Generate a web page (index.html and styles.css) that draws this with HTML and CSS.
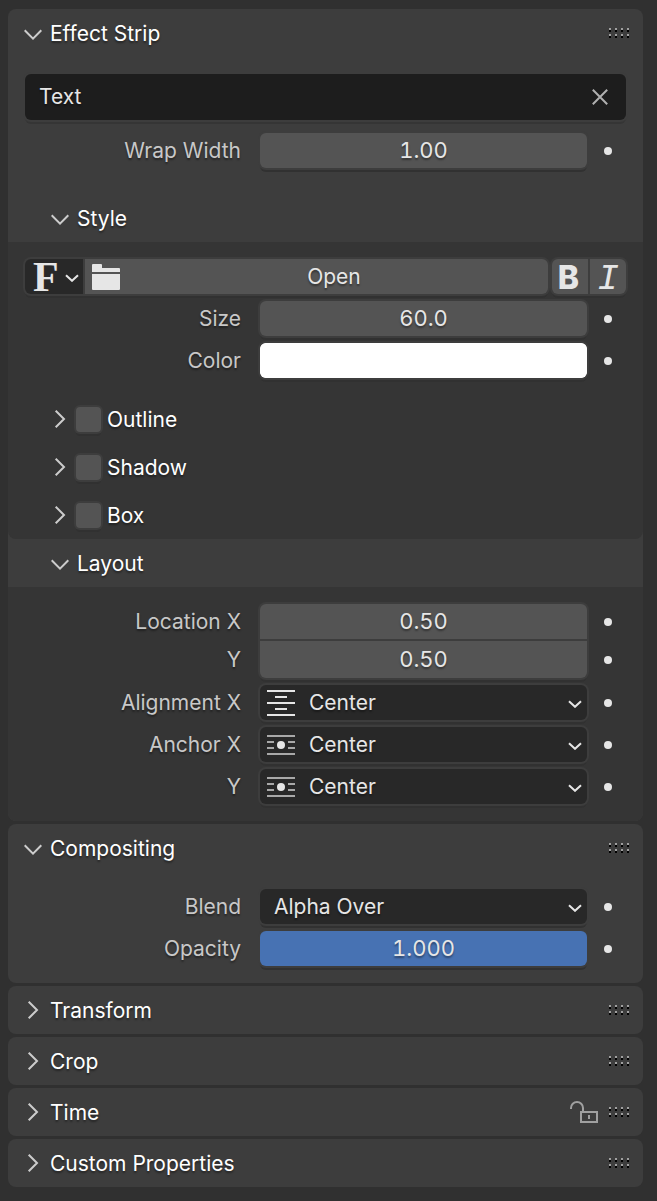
FILE: index.html
```html
<!DOCTYPE html>
<html lang="en">
<head>
<meta charset="utf-8">
<meta name="viewport" content="width=device-width, initial-scale=1">
<title>Strip Properties</title>
<link rel="stylesheet" href="styles.css">
</head>
<body>
<svg class="defs" aria-hidden="true">
  <symbol id="open" viewBox="0 0 18 18"><path class="line" d="M.7 6.200 9 14.600l8.300-8.400"/></symbol>
  <symbol id="closed" viewBox="0 0 18 18"><path class="line" d="M4.700.7 13 9l-8.300 8.300"/></symbol>
  <symbol id="drop" viewBox="0 0 14 8"><path class="line" d="M1 1.200l6 5.600 6-5.600"/></symbol>
  <symbol id="grip" viewBox="0 0 21 10">
    <path fill="#a0a0a0" d="M0 0h2v2H0zM6 0h2v2H6zM12 0h2v2h-2zM18 0h2v2h-2zM0 6h2v2H0zM6 6h2v2H6zM12 6h2v2h-2zM18 6h2v2h-2z"/>
    <path fill="#000" d="M0 2h2v2H0zM6 2h2v2H6zM12 2h2v2h-2zM18 2h2v2h-2zM0 8h2v2H0zM6 8h2v2H6zM12 8h2v2h-2zM18 8h2v2h-2z"/>
  </symbol>
  <symbol id="anchor" viewBox="0 0 28 28">
    <path stroke="#a8a8a8" stroke-width="2" d="M0 5h28M0 11h7M21 11h7M0 17h7M21 17h7M0 23h28"/>
    <circle cx="14" cy="14" r="4" fill="#e6e6e6"/>
  </symbol>
</svg>

<main class="panels">
  <section class="panel">
    <h2 class="head">
      <button class="toggle" type="button" aria-expanded="true"><svg class="chevron"><use href="#open"/></svg>Effect Strip</button>
      <svg class="grip"><use href="#grip"/></svg>
    </h2>
    <div class="content">
      <div class="textbox">
        <input class="textbox-input" type="text" value="Text" aria-label="Text">
        <button class="clear" type="button" aria-label="Clear"><svg class="clear-icon" viewBox="0 0 16 16"><path class="line" d="M.8.8l14.400 14.400M15.200.8.8 15.200"/></svg></button>
      </div>
      <div class="row">
        <label class="label" for="wrap">Wrap Width</label>
        <input class="field number" id="wrap" type="text" value="1.00">
        <button class="dot" type="button" aria-label="Animate wrap width"></button>
      </div>
    </div>

    <h3 class="head sub">
      <button class="toggle" type="button" aria-expanded="true"><svg class="chevron"><use href="#open"/></svg>Style</button>
    </h3>
    <div class="inset">
      <div class="content">
        <div class="fonts">
          <div class="joined font-source">
            <button class="font-menu" type="button" aria-label="Browse fonts"><span class="serif-f">F</span><svg class="drop"><use href="#drop"/></svg></button>
            <button class="file" type="button"><svg class="folder" viewBox="0 0 28 26"><path fill="#e6e6e6" d="M0 8V1q0-1 1-1h8q1 0 1 1v3h17q1 0 1 1v3zM0 10h28v15q0 1-1 1H1q-1 0-1-1z"/></svg><span class="file-name">Open</span></button>
          </div>
          <div class="joined">
            <button class="format bold" type="button" aria-label="Bold">B</button>
            <button class="format italic" type="button" aria-label="Italic">I</button>
          </div>
        </div>
        <div class="row">
          <label class="label" for="size">Size</label>
          <input class="field number" id="size" type="text" value="60.0">
          <button class="dot" type="button" aria-label="Animate size"></button>
        </div>
        <div class="row">
          <label class="label" for="color">Color</label>
          <input class="field swatch" id="color" type="color" value="#ffffff">
          <button class="dot" type="button" aria-label="Animate color"></button>
        </div>
      </div>
      <div class="head sub">
        <button class="toggle" type="button" aria-expanded="false" aria-label="Expand Outline"><svg class="chevron"><use href="#closed"/></svg></button>
        <input class="check" id="outline" type="checkbox"><label for="outline">Outline</label>
      </div>
      <div class="head sub">
        <button class="toggle" type="button" aria-expanded="false" aria-label="Expand Shadow"><svg class="chevron"><use href="#closed"/></svg></button>
        <input class="check" id="shadow" type="checkbox"><label for="shadow">Shadow</label>
      </div>
      <div class="head sub">
        <button class="toggle" type="button" aria-expanded="false" aria-label="Expand Box"><svg class="chevron"><use href="#closed"/></svg></button>
        <input class="check" id="box" type="checkbox"><label for="box">Box</label>
      </div>
    </div>

    <h3 class="head sub">
      <button class="toggle" type="button" aria-expanded="true"><svg class="chevron"><use href="#open"/></svg>Layout</button>
    </h3>
    <div class="inset">
      <div class="content">
        <div class="pair">
          <div class="row">
            <label class="label" for="locx">Location X</label>
            <input class="field number" id="locx" type="text" value="0.50">
            <button class="dot" type="button" aria-label="Animate location X"></button>
          </div>
          <div class="row">
            <label class="label" for="locy">Y</label>
            <input class="field number" id="locy" type="text" value="0.50">
            <button class="dot" type="button" aria-label="Animate location Y"></button>
          </div>
        </div>
        <div class="row">
          <label class="label" for="align">Alignment X</label>
          <div class="menu has-icon">
            <select class="field select" id="align"><option>Center</option></select>
            <svg class="menu-icon" viewBox="0 0 28 28"><path stroke="#e6e6e6" stroke-width="2" d="M0 2h28M8 8h12M0 14h28M8 20h12M0 26h28"/></svg>
            <svg class="drop"><use href="#drop"/></svg>
          </div>
          <button class="dot" type="button" aria-label="Animate alignment X"></button>
        </div>
        <div class="row">
          <label class="label" for="anchx">Anchor X</label>
          <div class="menu has-icon">
            <select class="field select" id="anchx"><option>Center</option></select>
            <svg class="menu-icon"><use href="#anchor"/></svg>
            <svg class="drop"><use href="#drop"/></svg>
          </div>
          <button class="dot" type="button" aria-label="Animate anchor X"></button>
        </div>
        <div class="row">
          <label class="label" for="anchy">Y</label>
          <div class="menu has-icon">
            <select class="field select" id="anchy"><option>Center</option></select>
            <svg class="menu-icon"><use href="#anchor"/></svg>
            <svg class="drop"><use href="#drop"/></svg>
          </div>
          <button class="dot" type="button" aria-label="Animate anchor Y"></button>
        </div>
      </div>
    </div>
  </section>

  <section class="panel">
    <h2 class="head">
      <button class="toggle" type="button" aria-expanded="true"><svg class="chevron"><use href="#open"/></svg>Compositing</button>
      <svg class="grip"><use href="#grip"/></svg>
    </h2>
    <div class="content">
      <div class="row">
        <label class="label" for="blend">Blend</label>
        <div class="menu">
          <select class="field select" id="blend"><option>Alpha Over</option></select>
          <svg class="drop"><use href="#drop"/></svg>
        </div>
        <button class="dot" type="button" aria-label="Animate blend"></button>
      </div>
      <div class="row">
        <label class="label" for="opacity">Opacity</label>
        <input class="field number full" id="opacity" type="text" value="1.000">
        <button class="dot" type="button" aria-label="Animate opacity"></button>
      </div>
    </div>
  </section>

  <section class="panel">
    <h2 class="head">
      <button class="toggle" type="button" aria-expanded="false"><svg class="chevron"><use href="#closed"/></svg>Transform</button>
      <svg class="grip"><use href="#grip"/></svg>
    </h2>
  </section>
  <section class="panel">
    <h2 class="head">
      <button class="toggle" type="button" aria-expanded="false"><svg class="chevron"><use href="#closed"/></svg>Crop</button>
      <svg class="grip"><use href="#grip"/></svg>
    </h2>
  </section>
  <section class="panel">
    <h2 class="head">
      <button class="toggle" type="button" aria-expanded="false"><svg class="chevron"><use href="#closed"/></svg>Time</button>
      <button class="lock" type="button" aria-label="Lock time"><svg class="lock-icon" viewBox="0 0 28 22"><path fill="none" stroke="#a0a0a0" stroke-width="2" d="M1 8V7a6 6 0 0 1 12 0v4M11 11h16v10H11zM19 14v4"/></svg></button>
      <svg class="grip"><use href="#grip"/></svg>
    </h2>
  </section>
  <section class="panel">
    <h2 class="head">
      <button class="toggle" type="button" aria-expanded="false"><svg class="chevron"><use href="#closed"/></svg>Custom Properties</button>
      <svg class="grip"><use href="#grip"/></svg>
    </h2>
  </section>
</main>
</body>
</html>
```
FILE: styles.css
```css
* {
  box-sizing: border-box;
}

body {
  margin: 0;
  background: #303030;
  color: #fff;
  font: 21px/28px Inter, "Liberation Sans", sans-serif;
  text-shadow: 0 2px 2px rgba(0, 0, 0, .4);
}

button,
input,
select {
  margin: 0;
  padding: 0;
  border: 0;
  border-radius: 0;
  background: none;
  color: inherit;
  font: inherit;
  text-shadow: inherit;
  appearance: none;
}

svg {
  display: block;
  flex: none;
}

.defs {
  position: absolute;
  width: 0;
  height: 0;
}

.line {
  fill: none;
  stroke: currentColor;
  stroke-width: 2;
}

.panels {
  display: flex;
  flex-direction: column;
  gap: 3px;
  padding: 9px 14px 14px 8px;
}

.panel {
  border-radius: 8px;
  background: #3d3d3d;
  overflow: hidden;
}

.head {
  display: flex;
  align-items: center;
  height: 48px;
  margin: 0;
  padding: 0 13px 0 16px;
  font-size: 21px;
  font-weight: 400;
  line-height: 29px;
}

.sub {
  padding-left: 43px;
}

.toggle {
  display: flex;
  align-items: center;
  gap: 8px;
}

.chevron {
  width: 18px;
  height: 18px;
  color: #ccc;
}

.grip {
  width: 21px;
  height: 10px;
  margin-left: auto;
}

.lock {
  margin-left: auto;
}

.lock + .grip {
  margin-left: 11px;
}

.lock-icon {
  width: 28px;
  height: 22px;
}

.content {
  display: flex;
  flex-direction: column;
  gap: 7px;
  padding: 17px;
}

.panel > .content + .sub {
  margin-top: 9px;
}

.inset {
  border-radius: 0 0 8px 8px;
  background: #353535;
}

.textbox {
  display: flex;
  height: 46px;
  margin-bottom: 6px;
  border-radius: 6px;
  background: #1d1d1d;
  box-shadow: 0 0 0 2px #3d3d3d, 0 4px 0 #353535;
}

.textbox-input {
  flex: 1;
  min-width: 0;
  padding-left: 14px;
  color: #e6e6e6;
}

.clear {
  padding: 0 18px;
  color: #b0b0b0;
}

.clear-icon {
  width: 16px;
  height: 16px;
}

.row {
  display: grid;
  grid-template-columns: minmax(0, 216fr) 19px minmax(0, 327fr) 39px;
  align-items: center;
}

.label {
  color: #c8c8c8;
  text-align: right;
}

.field {
  grid-column: 3;
  width: 100%;
  height: 35px;
  border-radius: 6px;
  background: #545454;
  color: #e6e6e6;
  box-shadow: 0 0 0 2px #3d3d3d, 0 4px 0 #313131;
}

.number {
  padding-bottom: 2px;
  font-size: 22px;
  text-align: center;
  font-variant-numeric: tabular-nums;
}

.full {
  background: #4772b3;
}

.swatch {
  background: #fff;
}

.swatch::-webkit-color-swatch-wrapper {
  padding: 0;
}

.swatch::-webkit-color-swatch {
  border: 0;
  border-radius: 6px;
}

.dot {
  width: 8px;
  height: 8px;
  margin-left: 17px;
  border-radius: 50%;
  background: #e6e6e6;
}

.pair {
  display: flex;
  flex-direction: column;
  gap: 2px;
}

.pair .row:first-child .field {
  border-radius: 6px 6px 0 0;
  box-shadow: 0 0 0 2px #3d3d3d;
}

.pair .row:last-child .field {
  height: 37px;
  border-radius: 0 0 6px 6px;
}

.menu {
  grid-column: 3;
  display: grid;
  grid-template-columns: minmax(0, 1fr);
  align-items: center;
}

.menu > * {
  grid-area: 1 / 1;
  pointer-events: none;
}

.menu .select {
  padding: 0 28px 0 14px;
  background: #282828;
  pointer-events: auto;
}

.menu.has-icon .select {
  padding-left: 49px;
}

.menu-icon {
  width: 28px;
  height: 28px;
  margin-left: 7px;
}

.drop {
  width: 14px;
  height: 8px;
  color: #e6e6e6;
}

.menu .drop {
  margin: 2px 5px 0 0;
  justify-self: end;
}

.fonts {
  display: flex;
  gap: 4px;
}

.joined {
  display: flex;
  gap: 2px;
  height: 35px;
  border-radius: 6px;
  background: #3d3d3d;
  box-shadow: 0 0 0 2px #3d3d3d, 0 4px 0 #313131;
  color: #e6e6e6;
}

.joined > :first-child {
  border-radius: 6px 0 0 6px;
}

.joined > :last-child {
  border-radius: 0 6px 6px 0;
}

.font-source {
  flex: 1;
}

.font-menu {
  display: flex;
  align-items: center;
  justify-content: space-between;
  width: 58px;
  padding: 2px 4px 0 8px;
  background: #282828;
}

.serif-f {
  font: bold 42px/33px "Liberation Serif", serif;
  text-shadow: none;
}

.file {
  display: flex;
  flex: 1;
  align-items: center;
  padding-left: 7px;
  background: #545454;
}

.folder {
  width: 28px;
  height: 26px;
}

.file-name {
  flex: 1;
  text-align: center;
}

.format {
  width: 36px;
  background: #545454;
  line-height: 29px;
  text-shadow: none;
}

.bold {
  padding: 2px 3px 0 0;
  font-size: 32px;
  font-weight: 800;
}

.italic {
  padding-top: 6px;
  font-family: "Liberation Mono", monospace;
  font-size: 36px;
  font-style: italic;
}

.check {
  width: 25px;
  height: 25px;
  margin: 0 6px 0 7px;
  border-radius: 4px;
  background: #545454;
  box-shadow: 0 0 0 2px #3d3d3d, 0 4px 0 #313131;
}

.check:checked {
  background: #4772b3;
}
```
